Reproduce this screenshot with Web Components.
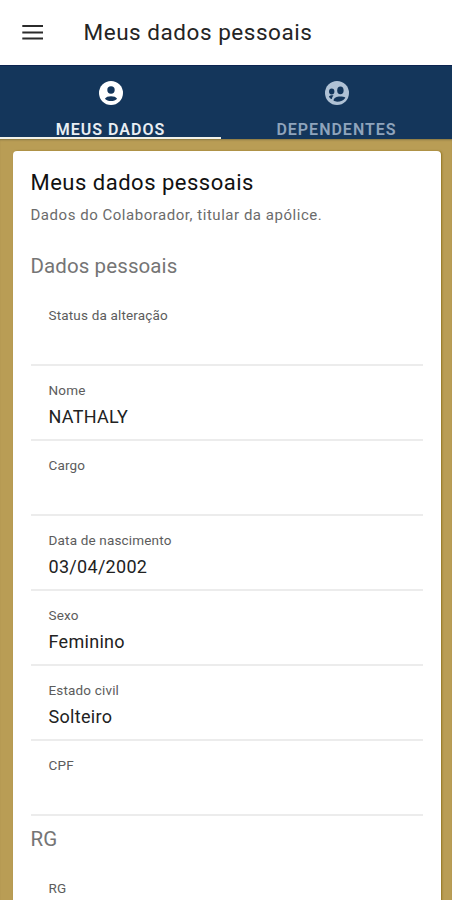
<!DOCTYPE html>
<html lang="pt-BR">
<head>
<meta charset="UTF-8">
<meta name="viewport" content="width=device-width, initial-scale=1">
<title>Meus dados pessoais</title>
<style>
  html, body {
    margin: 0;
    height: 100%;
    overflow: hidden;
    background: #b99d55;
    font-family: Roboto, "Liberation Sans", sans-serif;
  }
</style>
</head>
<body>
<app-page>
  <app-header slot="header">Meus dados pessoais</app-header>
  <app-tabs slot="header">
    <app-tab active>
      <svg slot="icon" viewBox="0 0 24 24">
        <circle cx="12" cy="12" r="12" fill="#fff"/>
        <circle cx="12" cy="9" r="3.7" fill="#14365b"/>
        <path d="M5.9 17.7c.9-1.700 3.400-2.500 6.100-2.500s5.200.8 6.100 2.500c-1.400 1.600-3.500 2.400-6.100 2.400s-4.700-.8-6.100-2.400z" fill="#14365b"/>
      </svg>
      Meus dados
    </app-tab>
    <app-tab>
      <svg slot="icon" viewBox="0 0 24 24">
        <circle cx="12" cy="12" r="12" fill="#b0c2d5"/>
        <g fill="#14365b">
          <ellipse cx="6.7" cy="10.5" rx="2.700" ry="2.900"/>
          <ellipse cx="15.4" cy="9.4" rx="3.200" ry="3.800"/>
          <path d="M3.900 15.600c1-1.200 2.800-1.500 4.600-1.100-.8.800-1.300 1.700-1.600 3.200-.4.200-.8.300-1.200.1-.8-.6-1.400-1.300-1.800-2.200z"/>
          <path d="M8.500 19.600c.2-2.800 3.200-4.100 6.700-4.100 2.100 0 4 .2 5.200 1.200-1.600 2.700-4.800 4-8.200 4-1.500 0-2.700-.3-3.700-1.100z"/>
        </g>
      </svg>
      Dependentes
    </app-tab>
  </app-tabs>
  <data-card heading="Meus dados pessoais" subtitle="Dados do Colaborador, titular da apólice.">
    <data-section heading="Dados pessoais">
      <data-field label="Status da alteração"></data-field>
      <data-field label="Nome">NATHALY</data-field>
      <data-field label="Cargo"></data-field>
      <data-field label="Data de nascimento">03/04/2002</data-field>
      <data-field label="Sexo">Feminino</data-field>
      <data-field label="Estado civil">Solteiro</data-field>
      <data-field label="CPF"></data-field>
    </data-section>
    <data-section heading="RG">
      <data-field label="RG"></data-field>
    </data-section>
  </data-card>
</app-page>

<script>
class AppPage extends HTMLElement {
  connectedCallback() {
    this.attachShadow({ mode: "open" });
    this.shadowRoot.innerHTML = `
      <style>
        :host {
          display: flex;
          flex-direction: column;
          height: 100vh;
          overflow: hidden;
        }

        .content {
          flex: 1;
          min-height: 0;
          overflow: hidden;
          padding: 12px 11px 0 12.5px;
          background: #b99d55;
          box-shadow: inset 0 2px 2px -1px rgba(60, 60, 40, 0.4);
        }
      </style>
      <slot name="header"></slot>
      <div class="content"><slot></slot></div>
    `;
  }
}

class AppHeader extends HTMLElement {
  connectedCallback() {
    this.attachShadow({ mode: "open" });
    this.shadowRoot.innerHTML = `
      <style>
        :host {
          display: flex;
          align-items: center;
          flex: none;
          box-sizing: border-box;
          height: 65px;
          padding: 0 0 1px 22px;
          gap: 39.5px;
          background: #fff;
          color: #242424;
          font-size: 22.5px;
          letter-spacing: 0.53px;
          white-space: nowrap;
        }

        svg {
          display: block;
          width: 22px;
          height: 16px;
        }
      </style>
      <svg viewBox="0 0 22 16">
        <path d="M0.3 2h20.700M0.3 8.500h20.700M0.3 14.500h20.700" stroke="#2b2b2b" stroke-width="2" fill="none"/>
      </svg>
      <span><slot></slot></span>
    `;
  }
}

class AppTabs extends HTMLElement {
  connectedCallback() {
    this.attachShadow({ mode: "open" });
    this.shadowRoot.innerHTML = `
      <style>
        :host {
          display: grid;
          grid-template-columns: 221px 231px;
          flex: none;
          box-sizing: border-box;
          height: 74px;
          background: #14365b;
          border-top: 1px solid #0c2450;
        }
      </style>
      <slot></slot>
    `;
  }
}

class AppTab extends HTMLElement {
  connectedCallback() {
    this.attachShadow({ mode: "open" });
    this.shadowRoot.innerHTML = `
      <style>
        :host {
          display: flex;
          flex-direction: column;
          align-items: center;
          box-sizing: border-box;
          height: 73px;
          padding-top: 14.5px;
          border-bottom: 2px solid transparent;
          color: #8fa4bc;
          font-size: 16px;
          font-weight: 600;
          line-height: 20px;
          letter-spacing: 1px;
          text-transform: uppercase;
          overflow: hidden;
        }

        :host([active]) {
          color: #e9eef3;
          border-bottom-color: #f2f2ea;
        }

        ::slotted(svg) {
          display: block;
          flex: none;
          width: 24px;
          height: 24px;
          margin-bottom: 15px;
        }
      </style>
      <slot name="icon"></slot>
      <span><slot></slot></span>
    `;
  }
}

class DataCard extends HTMLElement {
  connectedCallback() {
    this.attachShadow({ mode: "open" });
    this.shadowRoot.innerHTML = `
      <style>
        :host {
          display: block;
          box-sizing: border-box;
          min-height: 800px;
          padding: 18px 18px 0;
          background: #fff;
          border-radius: 4px;
          box-shadow: 1px 0 2px rgba(130, 100, 10, 0.7);
        }

        h1 {
          margin: 0;
          font-size: 22px;
          font-weight: 400;
          line-height: 28px;
          letter-spacing: 0.5px;
          color: #111;
        }

        p {
          margin: 8px 0 0;
          font-size: 15px;
          line-height: 21px;
          letter-spacing: 0.53px;
          color: #6b6b6b;
        }
      </style>
      <h1>${this.getAttribute("heading")}</h1>
      <p>${this.getAttribute("subtitle")}</p>
      <slot></slot>
    `;
  }
}

class DataSection extends HTMLElement {
  connectedCallback() {
    this.attachShadow({ mode: "open" });
    this.shadowRoot.innerHTML = `
      <style>
        :host {
          display: block;
        }

        :host(:first-child) {
          padding-top: 17px;
        }

        h2 {
          margin: 0;
          height: 48px;
          font-size: 20.5px;
          font-weight: 400;
          line-height: 47px;
          letter-spacing: 0.1px;
          color: #757575;
        }
      </style>
      <h2>${this.getAttribute("heading")}</h2>
      <slot></slot>
    `;
  }
}

class DataField extends HTMLElement {
  connectedCallback() {
    this.attachShadow({ mode: "open" });
    this.shadowRoot.innerHTML = `
      <style>
        :host {
          display: block;
          box-sizing: border-box;
          height: 75px;
          padding: 15px 18px 0;
          border-bottom: 2px solid #ececec;
        }

        .label {
          font-size: 13.5px;
          line-height: 18px;
          letter-spacing: 0.17px;
          color: #5c5c5c;
        }

        .value {
          margin-top: 6px;
          font-size: 18px;
          line-height: 24px;
          letter-spacing: 0.3px;
          color: #222;
        }
      </style>
      <div class="label">${this.getAttribute("label")}</div>
      <div class="value"><slot></slot></div>
    `;
  }
}

customElements.define("app-page", AppPage);
customElements.define("app-header", AppHeader);
customElements.define("app-tabs", AppTabs);
customElements.define("app-tab", AppTab);
customElements.define("data-card", DataCard);
customElements.define("data-section", DataSection);
customElements.define("data-field", DataField);
</script>
</body>
</html>
